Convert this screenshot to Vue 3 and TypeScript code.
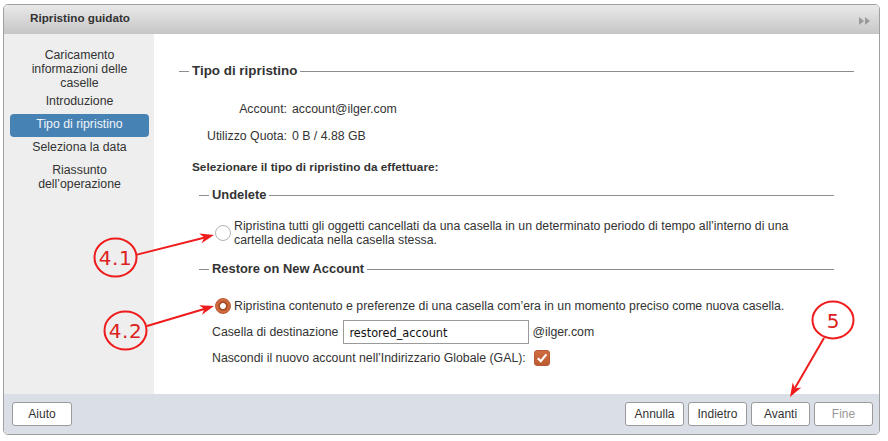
<script setup lang="ts">
const steps = [
  { label: 'Caricamento informazioni delle caselle', active: false },
  { label: 'Introduzione', active: false },
  { label: 'Tipo di ripristino', active: true },
  { label: 'Seleziona la data', active: false },
  { label: 'Riassunto dell’operazione', active: false },
]
</script>

<template>
  <div class="page">
    <div class="win">
      <header class="head">
        <span class="title">Ripristino guidato</span>
        <svg class="collapse" width="11" height="8" viewBox="0 0 11 8"><path d="M0 0l5 4-5 4zM6 0l5 4-5 4z" fill="#9a9a9a" /></svg>
      </header>
      <div class="body">
        <nav class="side">
          <div v-for="s in steps" :key="s.label" class="step" :class="{ on: s.active }">{{ s.label }}</div>
        </nav>
        <main class="main">
          <div class="legend big"><i class="dash"></i><span>Tipo di ripristino</span><i class="rule"></i></div>
          <div class="kv first"><span class="k">Account:</span><span>account@ilger.com</span></div>
          <div class="kv second"><span class="k">Utilizzo Quota:</span><span>0 B / 4.88 GB</span></div>
          <div class="prompt">Selezionare il tipo di ripristino da effettuare:</div>
          <section class="sub">
            <div class="legend"><i class="dash"></i><span>Undelete</span><i class="rule"></i></div>
            <div class="opt one">
              <span class="radio"></span>
              <span>Ripristina tutti gli oggetti cancellati da una casella in un determinato periodo di tempo all’interno di una cartella dedicata nella casella stessa.</span>
            </div>
            <div class="legend l2"><i class="dash"></i><span>Restore on New Account</span><i class="rule"></i></div>
            <div class="opt two">
              <span class="radio sel"></span>
              <span>Ripristina contenuto e preferenze di una casella com’era in un momento preciso come nuova casella.</span>
            </div>
            <div class="dest">
              <span>Casella di destinazione</span>
              <input class="inp" value="restored_account" />
              <span>@ilger.com</span>
            </div>
            <div class="hide">
              <span>Nascondi il nuovo account nell’Indirizzario Globale (GAL):</span>
              <span class="check">
                <svg width="12" height="12" viewBox="0 0 12 12"><path d="M1.8 6.2l3 3L10.4 2.4" fill="none" stroke="#fff" stroke-width="2.2" /></svg>
              </span>
            </div>
          </section>
        </main>
      </div>
      <footer class="foot">
        <button class="btn help">Aiuto</button>
        <div class="right">
          <button class="btn">Annulla</button>
          <button class="btn">Indietro</button>
          <button class="btn">Avanti</button>
          <button class="btn off">Fine</button>
        </div>
      </footer>
    </div>

    <svg class="marks" width="888" height="441" viewBox="0 0 888 441">
      <g fill="none" stroke="#ee1c1c" stroke-width="2">
        <ellipse cx="115.5" cy="257.5" rx="21" ry="19" />
        <ellipse cx="125.5" cy="330.5" rx="21" ry="19" />
        <ellipse cx="833" cy="320" rx="20.5" ry="18.5" />
        <path d="M137 254.6L205 237.5" />
        <path d="M147 326L205 308.8" />
        <path d="M824 338L795 388" />
      </g>
      <g fill="#ee1c1c">
        <path d="M214 235L201.6 243.3L204.3 237.5L199.2 233.6z" />
        <path d="M214 306L202 314.8L204.4 308.9L199.2 305.2z" />
        <path d="M790 397L801.3 387.4L795 388.3L792.7 382.4z" />
      </g>
      <g fill="#dd2020" class="marktext">
        <text class="wide" x="115.5" y="265" text-anchor="middle">4.1</text>
        <text class="wide" x="125.5" y="338" text-anchor="middle">4.2</text>
        <text x="833" y="327.5" text-anchor="middle">5</text>
      </g>
    </svg>
  </div>
</template>

<style>
html, body { margin: 0; background: #fff; }
</style>

<style scoped>
.page {
  position: relative;
  width: 888px;
  height: 441px;
  overflow: hidden;
  font-family: "Liberation Sans", Arial, sans-serif;
  font-size: 12.3px;
  color: #333;
}
.win {
  box-sizing: border-box;
  position: relative;
  top: 4px;
  left: 3px;
  width: 877px;
  height: 431px;
  border: 1px solid #a0a0a0;
  border-radius: 5px;
  overflow: hidden;
  display: flex;
  flex-direction: column;
}
.head {
  height: 29px;
  flex: none;
  box-sizing: border-box;
  display: flex;
  align-items: center;
  justify-content: space-between;
  padding: 0 9px 5px 26px;
  background: linear-gradient(#e9e9e9, #c6c6c6);
}
.title { font-weight: bold; font-size: 11.7px; color: #333; }
.collapse { margin-top: 8px; }
.body { flex: 1; display: flex; min-height: 0; }
.side {
  width: 150px;
  flex: none;
  box-sizing: border-box;
  background: #eeeeee;
  padding: 14px 5px 0 6px;
}
.step {
  text-align: center;
  line-height: 14px;
  padding: 0 12px;
  margin-bottom: 9px;
}
.step:first-child { margin-bottom: 4px; }
.step.on {
  background: #4682b4;
  color: #f0f4f8;
  border-radius: 4px;
  padding: 3px 12px 6px;
  margin: -3px 0 3px;
}
.main {
  flex: 1;
  min-width: 0;
  background: #fff;
  padding: 29px 25px 0 25px;
}
.legend {
  display: flex;
  align-items: center;
  font-weight: bold;
  font-size: 12.9px;
  line-height: 16px;
  gap: 3px;
}
.legend.big { font-size: 13.4px; }
.dash { width: 10px; height: 1px; background: #8c8c8c; flex: none; }
.rule { flex: 1; height: 1px; background: #8c8c8c; }
.kv { display: flex; gap: 5px; line-height: 14px; }
.kv.first { margin-top: 23px; }
.kv.second { margin-top: 13px; }
.k { width: 108px; text-align: right; }
.prompt { font-weight: bold; font-size: 11.8px; line-height: 14px; margin: 17px 0 0 13px; }
.sub { padding: 0 20px; margin-top: 13px; }
.opt { display: flex; align-items: flex-start; line-height: 14px; padding-left: 13px; }
.opt.one { margin-top: 16px; padding-right: 20px; }
.opt.two { margin-top: 22px; }
.opt.one .radio { margin-top: 6px; }
.l2 { margin-top: 14px; }
.radio {
  width: 16px;
  height: 16px;
  box-sizing: border-box;
  flex: none;
  border-radius: 50%;
  border: 1px solid #b4b4b4;
  background: #fff;
  margin: -1px 3px 0 3px;
}
.radio.sel {
  border: 1px solid #b8592f;
  background: radial-gradient(circle at 50% 50%, #fff 0 2.5px, #a84e28 3.4px 4.2px, #cf6a3e 5.5px);
}
.dest { display: flex; align-items: center; margin-top: 6px; gap: 3px; height: 24px; padding-left: 13px; }
.inp {
  box-sizing: border-box;
  width: 186px;
  height: 24px;
  margin-left: 2px;
  border: 1px solid #9a9a9a;
  border-radius: 0;
  padding: 0 5px;
  font-family: "DejaVu Sans Condensed", "DejaVu Sans", sans-serif;
  font-stretch: condensed;
  font-size: 12.6px;
  color: #111;
  outline: none;
}
.hide { display: flex; align-items: center; margin-top: 5px; gap: 8px; height: 18px; padding-left: 13px; }
.check {
  width: 16px;
  height: 16px;
  box-sizing: border-box;
  border-radius: 3px;
  background: linear-gradient(#cf6c40, #bd5c32);
  border: 1px solid #b55a34;
  display: flex;
  align-items: center;
  justify-content: center;
}
.foot {
  height: 40px;
  flex: none;
  box-sizing: border-box;
  background: #dadee6;
  display: flex;
  align-items: center;
  justify-content: space-between;
  padding: 0 6px 1px 8px;
}
.right { display: flex; gap: 4px; }
.btn {
  box-sizing: border-box;
  width: 59px;
  height: 24px;
  background: #fff;
  border: 1px solid #9a9a9a;
  border-radius: 3px;
  font-family: inherit;
  font-size: 12px;
  color: #333;
  padding: 0;
}
.btn.help { width: 60px; }
.btn.off { color: #999; }
.marks { position: absolute; left: 0; top: 0; pointer-events: none; }
.marktext { font-family: "DejaVu Sans", sans-serif; font-size: 20px; }
.wide { letter-spacing: 0.5px; }
</style>
